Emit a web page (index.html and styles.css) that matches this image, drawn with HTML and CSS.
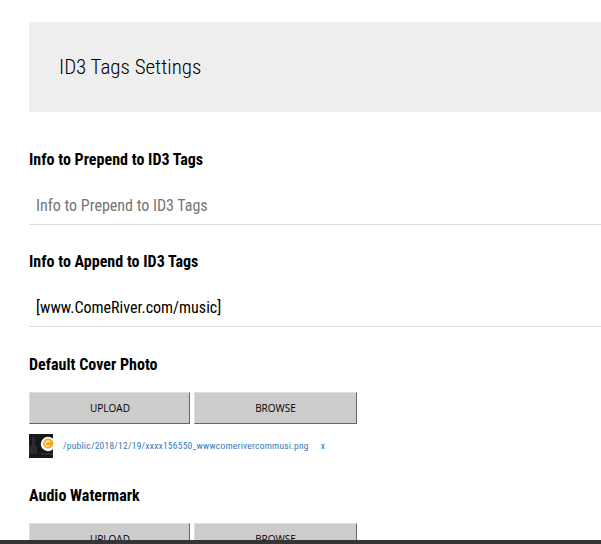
FILE: index.html
```html
<!DOCTYPE html>
<html lang="en">
<head>
<meta charset="utf-8">
<title>ID3 Tags Settings</title>
<link rel="stylesheet" href="styles.css">
</head>
<body>
<main class="settings">
  <header class="banner"><h1>ID3 Tags Settings</h1></header>
  <section class="field">
    <h2>Info to Prepend to ID3 Tags</h2>
    <div class="input placeholder"><span>Info to Prepend to ID3 Tags</span></div>
  </section>
  <section class="field">
    <h2>Info to Append to ID3 Tags</h2>
    <div class="input"><span>[www.ComeRiver.com/music]</span></div>
  </section>
  <section class="field cover">
    <h2>Default Cover Photo</h2>
    <div class="actions"><button>UPLOAD</button><button class="wide">BROWSE</button></div>
    <div class="file">
      <svg class="thumb" width="24" height="24" viewBox="0 0 24 24"><rect width="24" height="24" fill="#17181a"/><path d="M0 12h8v8H0zM3 3h3v9H3zM12 19h12v2H12z" fill="#2b2c2e"/><circle cx="19" cy="10" r="7.2" fill="#fff"/><circle cx="19.2" cy="9.5" r="5.1" fill="#f5a81c"/><path d="M21 8a2.6 2.6 0 1 0 0 3.4" fill="none" stroke="#fff" stroke-width="1.1"/></svg>
      <a class="path">/public/2018/12/19/xxxx156550_wwwcomerivercommusi.png</a><a class="remove">x</a>
    </div>
  </section>
  <section class="field audio">
    <h2>Audio Watermark</h2>
    <div class="actions"><button>UPLOAD</button><button class="wide">BROWSE</button></div>
  </section>
</main>
<footer class="bar"></footer>
</body>
</html>
```
FILE: styles.css
```css
* { box-sizing: border-box; }
body { margin: 0; height: 544px; overflow: hidden; display: flex; flex-direction: column; background: #fff; color: #000; font-family: "Roboto Condensed", Roboto, sans-serif; font-stretch: 75%; }
.settings { height: 540px; flex: none; overflow: hidden; padding: 22px 0 0 29px; }
.banner { height: 90px; background: #eee; padding: 0 30px; display: flex; align-items: center; margin-bottom: 37px; }
h1 { margin: 0; font-size: 21px; font-weight: 300; }
h2 { margin: 0; font-size: 16px; line-height: 22px; font-weight: 700; letter-spacing: 0.02px; }
.field { height: 102px; }
.input { height: 39px; margin-top: 15px; padding: 0 7px; border-bottom: 1px solid #ddd; font-size: 16px; line-height: 40px; }
.placeholder { color: #757575; }
.cover { height: 132px; padding-top: 1px; }
.actions { display: flex; gap: 4px; margin-top: 16px; }
button { width: 161px; height: 32px; padding: 0 0 0 1px; border: 1px solid; border-color: #dedede #666 #666 #dedede; background: #ccc; color: #000; font: 10px "Open Sans", sans-serif; }
.wide { width: 163px; padding: 0; }
.file { display: flex; align-items: center; margin-top: 10px; color: #337ab7; font-size: 9.5px; font-weight: 450; letter-spacing: 0.235px; }
.path { margin: 0 12px 0 10px; }
.path, .remove { padding-bottom: 2px; }
.bar { height: 4px; background: #353537; }
```
